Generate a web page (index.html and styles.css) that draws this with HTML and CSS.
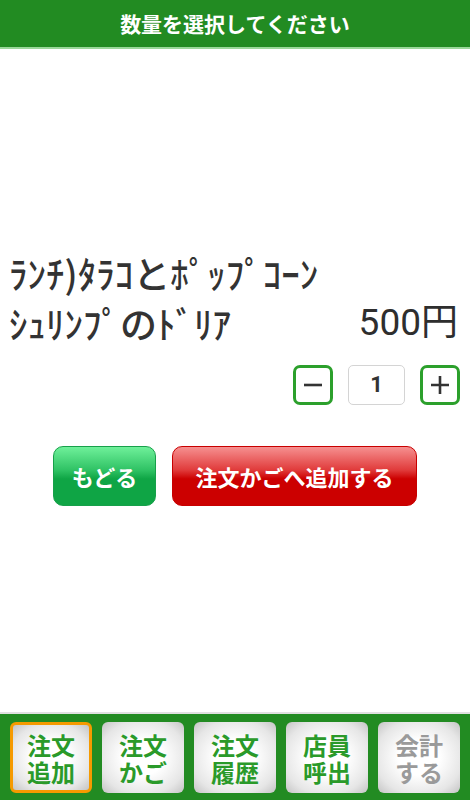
FILE: index.html
```html
<!DOCTYPE html>
<html lang="ja">
<head>
    <meta charset="UTF-8">
    <meta name="viewport" content="width=device-width, initial-scale=1.0">
    <title>数量選択</title>
    <link rel="stylesheet" href="styles.css">
</head>
<body>

<header class="title-bar">数量を選択してください</header>

<main class="qty-page">
    <div class="item-row">
        <div class="item-name">ﾗﾝﾁ)ﾀﾗｺとﾎﾟｯﾌﾟｺｰﾝｼｭﾘﾝﾌﾟのﾄﾞﾘｱ</div>
        <div class="item-price">500円</div>
    </div>

    <div class="qty-row">
        <button type="button" class="qty-btn" onclick="changeQty(-1)">
            <svg width="22" height="22" viewBox="0 0 22 22"><path d="M2 11H20" stroke="#333" stroke-width="2.6"/></svg>
        </button>
        <div class="qty-value" id="qty">1</div>
        <button type="button" class="qty-btn" onclick="changeQty(1)">
            <svg width="22" height="22" viewBox="0 0 22 22"><path d="M2 11H20M11 2V20" stroke="#333" stroke-width="2.6"/></svg>
        </button>
    </div>

    <div class="action-row">
        <button type="button" class="btn btn-back">もどる</button>
        <button type="button" class="btn btn-add">注文かごへ追加する</button>
    </div>
</main>

<nav class="tab-bar">
    <button type="button" class="tab active"><span>注文</span><span>追加</span></button>
    <button type="button" class="tab"><span>注文</span><span>かご</span></button>
    <button type="button" class="tab"><span>注文</span><span>履歴</span></button>
    <button type="button" class="tab"><span>店員</span><span>呼出</span></button>
    <button type="button" class="tab disabled"><span>会計</span><span>する</span></button>
</nav>

<script>
    function changeQty(step) {
        const el = document.getElementById("qty");
        const next = Math.max(1, parseInt(el.textContent, 10) + step);
        el.textContent = next;
    }
</script>

</body>
</html>
```

FILE: styles.css
```css
* {
    box-sizing: border-box;
    margin: 0;
    padding: 0;
    font-family: "Noto Sans CJK JP", "Noto Sans", sans-serif;
}

body {
    display: flex;
    flex-direction: column;
    min-height: 100vh;
    background-color: #fff;
}

.title-bar {
    height: 49px;
    background-color: #228b22;
    border-bottom: 2px solid #9ad89a;
    color: #fff;
    font-size: 21px;
    font-weight: 700;
    text-align: center;
    line-height: 46px;
}

.qty-page {
    flex: 1;
    padding-top: 199px;
}

.item-row {
    display: flex;
    align-items: flex-end;
    justify-content: space-between;
    padding: 0 12px 0 9px;
}

.item-name {
    width: 326px;
    font-size: 37px;
    font-weight: 500;
    line-height: 50px;
    color: #333;
}

.item-price {
    font-family: Roboto, "Noto Sans CJK JP", sans-serif;
    font-size: 37px;
    font-weight: 400;
    line-height: 50px;
    color: #2e2e2e;
}

.qty-row {
    display: flex;
    justify-content: flex-end;
    gap: 15px;
    padding-right: 10px;
    margin-top: 17px;
}

.qty-btn {
    width: 40px;
    height: 40px;
    border: 3px solid #2ca02c;
    border-radius: 7px;
    background-color: #fff;
    display: flex;
    align-items: center;
    justify-content: center;
    cursor: pointer;
}

.qty-value {
    width: 57px;
    height: 40px;
    border: 1px solid #d4d4d4;
    border-radius: 5px;
    font-family: Roboto, sans-serif;
    font-size: 22px;
    font-weight: 700;
    color: #333;
    text-align: center;
    line-height: 37px;
}

.action-row {
    display: flex;
    justify-content: center;
    gap: 16px;
    margin-top: 41px;
}

.btn {
    height: 60px;
    border-radius: 10px;
    color: #fff;
    font-size: 22px;
    font-weight: 700;
    cursor: pointer;
}

.btn-back {
    width: 103px;
    border: 1px solid #17a04a;
    background: linear-gradient(#6ff09a 0%, #2fc264 40%, #0fa545 55%, #0fa545 100%);
}

.btn-add {
    width: 245px;
    border: 1px solid #c80000;
    background: linear-gradient(#f69090 0%, #e03a3a 40%, #cc0000 55%, #cc0000 100%);
}

.tab-bar {
    display: grid;
    grid-template-columns: repeat(5, 1fr);
    gap: 10px;
    height: 88px;
    padding: 8px 10px 7px;
    background-color: #228b22;
    border-top: 2px solid #e0e0e0;
}

.tab {
    display: flex;
    flex-direction: column;
    align-items: center;
    justify-content: center;
    border: none;
    border-radius: 6px;
    background: radial-gradient(ellipse at center, #ffffff 35%, #e6e6e6 75%, #c4c4c4 100%);
    color: #2a9a2a;
    font-family: "Liberation Sans", "Noto Sans CJK JP", sans-serif;
    font-size: 24px;
    font-weight: 700;
    cursor: pointer;
}

.tab span {
    display: block;
    height: 27px;
    line-height: 27px;
}

.tab.active {
    border: 3px solid #f59a00;
}

.tab.disabled {
    color: #9a9a9a;
}
```
